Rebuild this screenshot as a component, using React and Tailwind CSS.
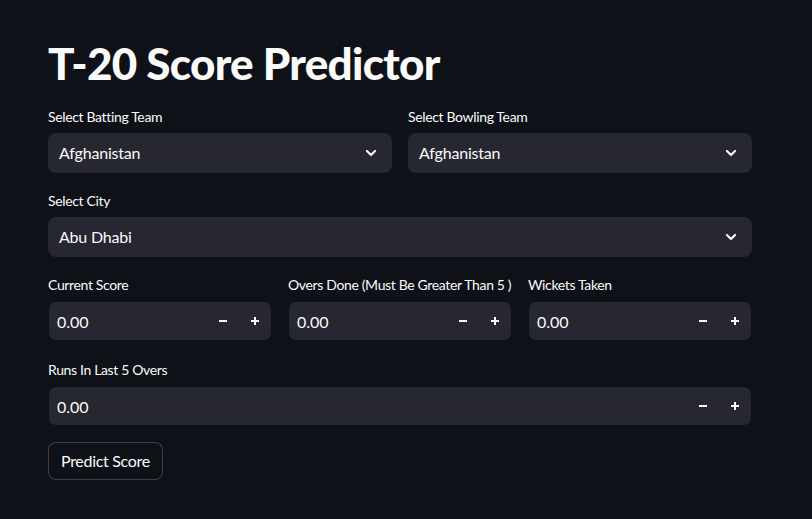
import React from "react";

const font = { fontFamily: "Lato, 'Noto Sans', sans-serif" };

function Chevron() {
  return (
    <svg width="14" height="14" viewBox="0 0 24 24" fill="none" className="shrink-0">
      <path d="M5 8.5l7 7 7-7" stroke="#fafafa" strokeWidth="3.6" strokeLinecap="round" strokeLinejoin="round" />
    </svg>
  );
}

function Label({ children }) {
  return <div className="h-6 flex items-center text-sm text-[#fafafa] mb-1 whitespace-nowrap tracking-[-0.35px]">{children}</div>;
}

function Select({ label, value }) {
  return (
    <div className="flex flex-col">
      <Label>{label}</Label>
      <div className="h-10 rounded-lg bg-[#262730] flex items-center justify-between pl-[11px] pr-[14px] text-base text-[#fafafa] tracking-[-0.2px]">
        <span>{value}</span>
        <Chevron />
      </div>
    </div>
  );
}

function NumberInput({ label }) {
  return (
    <div className="flex flex-col">
      <Label>{label}</Label>
      <div className="h-10 rounded-lg bg-[#262730] border border-[#0e1117] flex items-center text-base text-[#fafafa]">
        <span className="flex-1 pl-2 pt-[1px]">0.00</span>
        <div className="w-8 h-full flex items-center justify-center">
          <svg width="10" height="10" viewBox="0 0 10 10"><path d="M1 5h8" stroke="#fafafa" strokeWidth="2" /></svg>
        </div>
        <div className="w-8 h-full flex items-center justify-center">
          <svg width="10" height="10" viewBox="0 0 10 10"><path d="M1 5h8M5 1v8" stroke="#fafafa" strokeWidth="2" /></svg>
        </div>
      </div>
    </div>
  );
}

export default function App() {
  return (
    <div className="min-h-[519px] w-full bg-[#0e1117] text-[#fafafa]" style={font}>
      <div className="w-[704px] ml-12 pt-[35px] flex flex-col">
        <h1 className="text-[44px] font-black leading-[56px] mb-[14px] tracking-[-0.7px]">T-20 Score Predictor</h1>
        <div className="grid grid-cols-2 gap-4">
          <Select label="Select Batting Team" value="Afghanistan" />
          <Select label="Select Bowling Team" value="Afghanistan" />
        </div>
        <div className="mt-4">
          <Select label="Select City" value="Abu Dhabi" />
        </div>
        <div className="mt-4 grid grid-cols-3 gap-4">
          <NumberInput label="Current Score" />
          <NumberInput label="Overs Done (Must Be Greater Than 5 )" />
          <NumberInput label="Wickets Taken" />
        </div>
        <div className="mt-[17px]">
          <NumberInput label="Runs In Last 5 Overs" />
        </div>
        <div className="mt-4">
          <button className="h-[38px] px-3 rounded-lg border border-[rgba(250,250,250,0.2)] bg-[#0e1117] text-base text-[#fafafa] tracking-[-0.3px]">
            Predict Score
          </button>
        </div>
      </div>
    </div>
  );
}
